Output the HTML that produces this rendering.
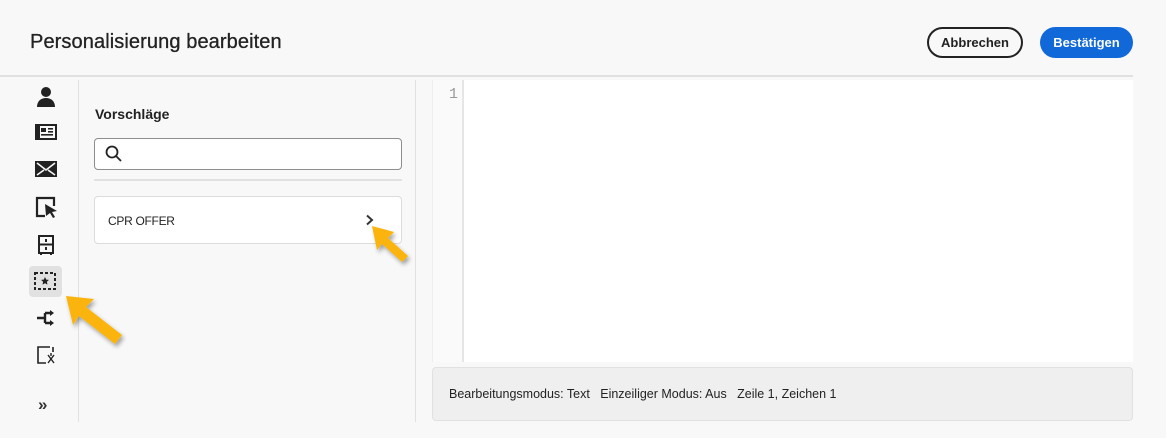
<!DOCTYPE html>
<html><head><meta charset="utf-8"><style>
*{margin:0;padding:0;box-sizing:border-box}
body{width:1166px;height:438px;background:#f8f8f8;font-family:"Liberation Sans",sans-serif;position:relative;overflow:hidden;color:#222}
.abs{position:absolute}
h1{position:absolute;left:30px;top:31px;font-size:20px;font-weight:normal;color:#222;letter-spacing:0.1px;-webkit-text-stroke:0.3px #222}
.btn{position:absolute;top:27px;height:31px;border-radius:16px;font-size:13px;font-weight:bold;display:flex;align-items:center;justify-content:center}
.b1{left:927px;width:96px;border:2px solid #222;color:#222}
.b2{left:1040px;width:93px;background:#1068d9;color:#fff}
.hline{left:0;top:75px;width:1133px;height:2px;background:#e1e1e1}
.vl{width:1px;background:#e1e1e1}
.ic{position:absolute;left:34px;width:24px;height:24px}
</style></head><body>
<h1>Personalisierung bearbeiten</h1>
<div class="btn b1">Abbrechen</div>
<div class="btn b2">Bestätigen</div>
<div class="abs hline"></div>
<div class="abs vl" style="left:78px;top:80px;height:342px"></div>
<div class="abs vl" style="left:415px;top:80px;height:342px"></div>

<svg class="ic" style="top:85px" viewBox="0 0 24 24"><circle cx="12" cy="7" r="5" fill="#222"/><path d="M3 22c0-6 4-9 9-9s9 3 9 9z" fill="#222"/></svg>
<svg class="ic" style="top:120px" viewBox="0 0 24 24"><path d="M2 5v14h20V5H5v12H3V5z" fill="none" stroke="#222" stroke-width="2"/><rect x="7" y="8" width="5" height="4" fill="#222"/><rect x="14" y="8" width="5" height="1.6" fill="#222"/><rect x="14" y="11" width="5" height="1.6" fill="#222"/><rect x="7" y="14" width="12" height="1.6" fill="#222"/></svg>
<svg class="ic" style="top:157px" viewBox="0 0 24 24"><rect x="1" y="4" width="22" height="16" fill="#222"/><path d="M3 6l9 7 9-7M3 18l7-5M21 18l-7-5" stroke="#f8f8f8" stroke-width="1.6" fill="none"/></svg>
<svg class="ic" style="top:195px" viewBox="0 0 24 24"><path d="M14 3H3v18h8" fill="none" stroke="#222" stroke-width="2.2"/><path d="M14 3h6v8" fill="none" stroke="#222" stroke-width="2.2"/><path d="M11 9l12 7-5 1 3 5-2 1-3-5-4 3z" fill="#222"/></svg>
<svg class="ic" style="top:233px" viewBox="0 0 24 24"><rect x="5" y="3" width="14" height="17" fill="none" stroke="#222" stroke-width="2"/><line x1="5" y1="11.5" x2="19" y2="11.5" stroke="#222" stroke-width="2"/><rect x="11" y="6" width="2" height="3" fill="#222"/><rect x="11" y="14" width="2" height="3" fill="#222"/><rect x="6" y="20" width="2" height="2" fill="#222"/><rect x="16" y="20" width="2" height="2" fill="#222"/></svg>
<div class="abs" style="left:29px;top:266px;width:33px;height:31px;background:#e1e1e1;border-radius:4px"></div>
<svg class="ic" style="top:269px;left:33px" viewBox="0 0 24 24"><rect x="2" y="4" width="20" height="16" fill="none" stroke="#222" stroke-width="2" stroke-dasharray="3 2"/><path d="M12 8l1.2 2.6 2.8.3-2.1 1.9.6 2.8L12 14.2 9.5 15.6l.6-2.8L8 10.9l2.8-.3z" fill="#222"/></svg>
<svg class="ic" style="top:306px" viewBox="0 0 24 24"><path d="M3 12h8M11 7v10M11 7h6M11 17h6" stroke="#222" stroke-width="2.4" fill="none"/><path d="M16 4l4 3-4 3zM16 14l4 3-4 3z" fill="#222"/></svg>
<svg class="ic" style="top:343px" viewBox="0 0 24 24"><path d="M12 4H4v16h8" fill="none" stroke="#222" stroke-width="1.6"/><path d="M12 4h4M19 4v5" stroke="#222" stroke-width="1.6"/><path d="M14 12l6 8M20 12l-6 8M17 10v3" stroke="#222" stroke-width="1.4"/></svg>
<div class="abs" style="left:38px;top:395px;font-size:17px;font-weight:bold;color:#333">»</div>

<div class="abs" style="left:95px;top:106px;font-size:14px;font-weight:bold;color:#222">Vorschläge</div>
<div class="abs" style="left:94px;top:138px;width:308px;height:32px;border:1px solid #8e8e8e;border-radius:4px;background:#fff"></div>
<svg class="abs" style="left:104px;top:144px" width="20" height="20" viewBox="0 0 20 20"><circle cx="8" cy="8" r="5.5" fill="none" stroke="#222" stroke-width="1.8"/><line x1="12" y1="12" x2="17" y2="17" stroke="#222" stroke-width="1.8"/></svg>
<div class="abs" style="left:94px;top:179px;width:308px;height:2px;background:#e1e1e1"></div>
<div class="abs" style="left:94px;top:196px;width:308px;height:48px;border:1px solid #dcdcdc;border-radius:4px;background:#fff"></div>
<div class="abs" style="left:108px;top:214px;font-size:12px;color:#222;letter-spacing:-0.3px">CPR OFFER</div>
<svg class="abs" style="left:365px;top:214px" width="10" height="12" viewBox="0 0 10 12"><path d="M2 1.5l5 4.5-5 4.5" fill="none" stroke="#333" stroke-width="2"/></svg>

<div class="abs" style="left:432px;top:80px;width:701px;height:282px;background:#fff"></div>
<div class="abs" style="left:432px;top:80px;width:30px;height:282px;background:#fafafa;border-left:1px solid #eee"></div>
<div class="abs" style="left:462px;top:80px;width:2px;height:282px;background:#e6e6e6"></div>
<div class="abs" style="left:449px;top:86px;font-family:'Liberation Mono',monospace;font-size:15px;color:#999">1</div>
<div class="abs" style="left:432px;top:367px;width:701px;height:54px;background:#efefef;border:1px solid #e1e1e1;border-radius:4px"></div>
<div class="abs" style="left:449px;top:387px;font-size:12.5px;color:#222">Bearbeitungsmodus: Text&nbsp;&nbsp;&nbsp;Einzeiliger Modus: Aus&nbsp;&nbsp;&nbsp;Zeile 1, Zeichen 1</div>

<svg class="abs" style="left:0;top:0" width="1166" height="438" viewBox="0 0 1166 438">
<defs><filter id="s"><feDropShadow dx="2" dy="3" stdDeviation="2" flood-opacity="0.35"/></filter></defs>
<g filter="url(#s)" fill="#fbb40f">
<path d="M66 296l28 3-8 8 36 28-7 9-36-28-6 9z"/>
<path d="M372 226l22 6-6 6 20 18-6 6-20-18-5 6z"/>
</g></svg>
</body></html>
